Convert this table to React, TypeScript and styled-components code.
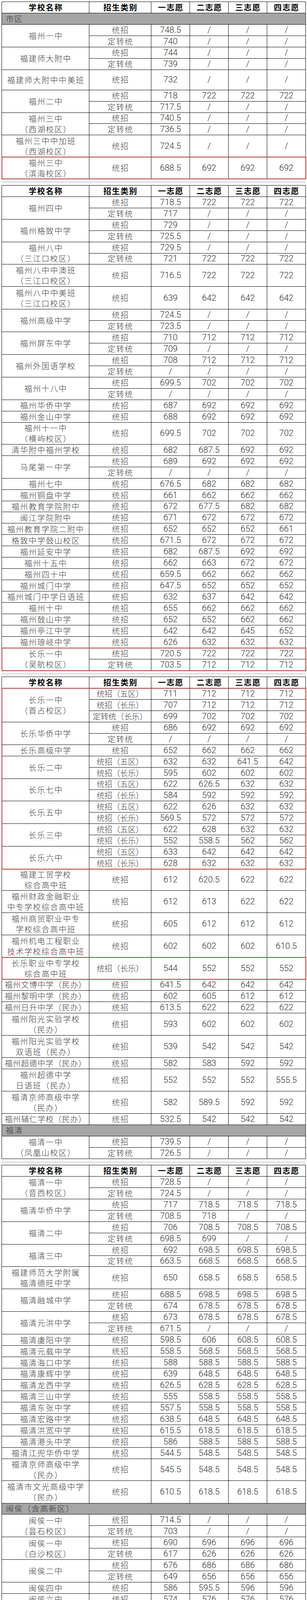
import React from 'react';
import styled, { createGlobalStyle } from 'styled-components';

const ROW = 28.94;
const TALL = 57;

const GlobalStyle = createGlobalStyle`
  html, body {
    margin: 0;
    padding: 0;
    background: #fff;
  }
  body {
    font-family: "Noto Sans CJK SC", "Noto Sans", sans-serif;
    color: #3a3a3a;
  }
`;

const Page = styled.div`
  width: 787px;
  box-sizing: border-box;
  padding: 4px 3px 0 4px;
`;

const Sheet = styled.div`
  width: 780px;
  box-sizing: border-box;
  border-left: 1px solid #000;
  border-top: 1px solid #000;
`;

const Break = styled.div`
  height: 15.5px;
  background:
    linear-gradient(to bottom, transparent 7px, #cdcdcd 7px, #cdcdcd 9px, transparent 9px),
    linear-gradient(to right, transparent 16px, #dadada 16px, #dadada 17px, transparent 17px,
      transparent 761px, #dadada 761px, #dadada 762px, transparent 762px);
`;

const HeadRow = styled.div`
  display: grid;
  grid-template-columns: 224px 159px repeat(4, 99px);
  grid-template-rows: 100%;
  height: ${ROW}px;
`;

const Cell = styled.div`
  box-sizing: border-box;
  min-height: 0;
  border-right: 1px solid #000;
  border-bottom: 1px solid #000;
  display: flex;
  align-items: center;
  justify-content: center;
  white-space: nowrap;
  overflow: hidden;
  line-height: 26px;
`;

const HeadCell = styled(Cell)`
  font-size: 20px;
  font-weight: 700;
  letter-spacing: 2px;
  color: #000;
  padding-left: 2px;
`;

const SectionRow = styled.div`
  box-sizing: border-box;
  height: ${ROW}px;
  background: #a6a6a6;
  border-right: 1px solid #000;
  border-bottom: 1px solid #000;
  display: flex;
  align-items: center;
  padding-left: 10px;
  font-size: 20px;
  font-weight: 300;
  letter-spacing: 2px;
  line-height: 26px;
  color: #333;
`;

const Group = styled.div`
  display: flex;
`;

const NameCell = styled(Cell)<{ $tight: boolean }>`
  width: 224px;
  flex: none;
  flex-direction: column;
  font-size: 20px;
  font-weight: 300;
  line-height: 27px;
  letter-spacing: ${(p) => (p.$tight ? '1px' : '2px')};
  padding-left: ${(p) => (p.$tight ? '1px' : '2px')};
`;

const Subs = styled.div`
  display: flex;
  flex-direction: column;
`;

const SubRow = styled.div<{ $h: number }>`
  display: grid;
  grid-template-columns: 159px repeat(4, 99px);
  grid-template-rows: 100%;
  height: ${(p) => p.$h}px;
`;

const KindCell = styled(Cell)<{ $long: boolean }>`
  font-size: 20px;
  font-weight: 300;
  letter-spacing: ${(p) => (p.$long ? '0' : '2px')};
  padding-left: ${(p) => (p.$long ? '0' : '2px')};
`;

const NumCell = styled(Cell)`
  font-family: Roboto, "Liberation Sans", sans-serif;
  font-size: 22px;
  font-weight: 300;
  color: #333;
`;

const Marked = styled.div`
  outline: 2px solid #b23b35;
  outline-offset: -1px;
`;

type School = { name: string; subs: string[]; h?: number };
type Item =
  | { kind: 'section'; label: string }
  | { kind: 'school'; school: School }
  | { kind: 'mark'; schools: School[] };

const sc = (name: string, subs: string[], h?: number): School => ({ name, subs, h });
const one = (name: string, vals: string, h?: number): Item => ({
  kind: 'school',
  school: sc(name, ['统招 ' + vals], h),
});
const two = (name: string, a: string, b: string): Item => ({
  kind: 'school',
  school: sc(name, ['统招 ' + a, '定转统 ' + b]),
});
const sec = (label: string): Item => ({ kind: 'section', label });
const mark = (...schools: School[]): Item => ({ kind: 'mark', schools });

const NONE = '/ / / /';
const ONLY = (v: string) => `${v} / / /`;

const blocks: Item[][] = [
  [
    sec('市区'),
    two('福州一中', ONLY('748.5'), ONLY('740')),
    two('福建师大附中', ONLY('744'), ONLY('739')),
    one('福建师大附中中美班', ONLY('732'), 52),
    two('福州二中', '718 722 722 722', ONLY('717.5')),
    two('福州三中|（西湖校区）', ONLY('740.5'), ONLY('736.5')),
    one('福州三中中加班|（西湖校区）', ONLY('724.5'), 56),
    mark(sc('福州三中|（滨海校区）', ['统招 688.5 692 692 692'], 56)),
  ],
  [
    two('福州四中', '718.5 722 722 722', ONLY('717')),
    two('福州格致中学', ONLY('729'), ONLY('725.5')),
    two('福州八中|（三江口校区）', ONLY('729.5'), '721 722 722 722'),
    one('福州八中中澳班|（三江口校区）', '716.5 722 722 722'),
    one('福州八中中美班|（三江口校区）', '639 642 642 642', 58),
    two('福州高级中学', ONLY('724.5'), ONLY('723.5')),
    two('福州屏东中学', '710 712 712 712', ONLY('709')),
    two('福州外国语学校', '708 712 712 712', NONE),
    two('福州十八中', '699.5 702 702 702', NONE),
    one('福州华侨中学', '687 692 692 692'),
    one('福州金山中学', '688 692 692 692'),
    one('福州十一中|（横屿校区）', '699.5 702 702 702', 56),
    one('清华附中福州学校', '682 687.5 692 692'),
    two('马尾第一中学', '689 692 692 692', NONE),
    one('福州七中', '676.5 682 682 682'),
    one('福州铜盘中学', '661 662 662 662'),
    one('福州教育学院附中', '672 677.5 682 682'),
    one('闽江学院附中', '671 672 672 672'),
    one('福州教育学院二附中', '652 652 652 661'),
    one('格致中学鼓山校区', '671.5 672 672 672'),
    one('福州延安中学', '682 687.5 692 692'),
    one('福州十五中', '662 663 672 672'),
    one('福州四十中', '659.5 662 662 662'),
    one('福州城门中学', '647.5 652 652 652'),
    one('福州城门中学日语班', '632 637 642 642'),
    one('福州十中', '655 662 662 662'),
    one('福州鼓山中学', '652 652 662 662'),
    one('福州亭江中学', '642 642 645 652'),
    one('福州琅岐中学', '626 632 632 632'),
    mark(sc('长乐一中|（吴航校区）', ['统招 720.5 722 722 722', '定转统 703.5 712 712 712'])),
  ],
  [
    mark(
      sc('长乐一中|（首占校区）', [
        '统招（五区） 711 712 712 712',
        '统招（长乐） 707 712 712 712',
        '定转统（长乐） 699 702 702 702',
      ]),
      sc('长乐华侨中学', ['统招 686 692 692 692', '定转统 ' + NONE]),
      sc('长乐高级中学', ['统招 652 662 662 662']),
      sc('长乐二中', ['统招（五区） 632 632 641.5 642', '统招（长乐） 595 602 602 602']),
      sc('长乐七中', ['统招（五区） 622 626.5 632 632', '统招（长乐） 584 592 592 592']),
      sc('长乐五中', ['统招（五区） 622 626 632 632', '统招（长乐） 569.5 572 572 572']),
      sc('长乐三中', ['统招（五区） 622 628 632 632', '统招（长乐） 552 558.5 562 562']),
      sc('长乐六中', ['统招（五区） 633 642 642 642', '统招（长乐） 628 632 632 632']),
    ),
    one('福建工贸学校|综合高中班', '612 620.5 622 622', 55),
    one('福州财政金融职业|中专学校综合高中班', '612 613 622 622'),
    one('福州商贸职业中专|学校综合高中班', '605 612 612 612'),
    one('福州机电工程职业|技术学校综合高中班', '602 602 602 610.5'),
    mark(sc('长乐职业中专学校|综合高中班', ['统招（长乐） 544 552 552 552'], 56)),
    one('福州文博中学（民办）', '641.5 642 642 642'),
    one('福州黎明中学（民办）', '602 605 612 612'),
    one('福州日升中学（民办）', '613.5 622 622 622'),
    one('福州阳光实验学校|（民办）', '593 602 602 602'),
    one('福州阳光实验学校|双语班（民办）', '539 542 542 542'),
    one('福州超德中学（民办）', '582 583 592 592'),
    one('福州超德中学|日语班（民办）', '552 552 552 555.5'),
    one('福清京师高级中学|（民办）', '582 589.5 592 592'),
    one('福州辅仁学校（民办）', '532.5 542 542 542'),
    sec('福清'),
    two('福清一中|（凤凰山校区）', ONLY('739.5'), ONLY('726.5')),
  ],
  [
    two('福清一中|（音西校区）', ONLY('728.5'), ONLY('724.5')),
    two('福清华侨中学', '717 718.5 718.5 718.5', '708.5 718 / /'),
    two('福清二中', '706 708.5 708.5 708.5', '698.5 699 / /'),
    two('福清三中', '692 698.5 698.5 698.5', '663.5 668.5 668.5 668.5'),
    one('福建师范大学附属|福清德旺中学', '650 658.5 658.5 658.5'),
    two('福清融城中学', '688.5 698.5 698.5 698.5', '674 678.5 678.5 678.5'),
    two('福清元洪中学', '673 678.5 678.5 678.5', ONLY('671.5')),
    one('福清虞阳中学', '598.5 606 608.5 608.5'),
    one('福清元载中学', '558.5 568.5 568.5 568.5'),
    one('福清海口中学', '588 588.5 588.5 588.5'),
    one('福清康辉中学', '639 648.5 648.5 648.5'),
    one('福清龙西中学', '626.5 628.5 628.5 628.5'),
    one('福清三山中学', '555 558.5 558.5 558.5'),
    one('福清东张中学', '557.5 558.5 558.5 558.5'),
    one('福清宏路中学', '638.5 648.5 648.5 648.5'),
    one('福清洪宽中学', '615.5 618.5 618.5 618.5'),
    one('福清港头中学', '586 588.5 588.5 588.5'),
    one('福清江兜华侨中学', '544.5 548.5 548.5 548.5'),
    one('福清京师高级中学|（民办）', '545.5 548.5 548.5 548.5', 56),
    one('福清市文光高级中学|（民办）', '610.5 618.5 618.5 618.5', 58),
    sec('闽侯（含高新区）'),
    two('闽侯一中|（昙石校区）', ONLY('714.5'), ONLY('703')),
    two('闽侯一中|（白沙校区）', '690 696 696 696', '617 626 626 626'),
    two('闽侯二中', '676 686 686 686', '649 656 656 656'),
    one('闽侯四中', '586 595.5 596 596'),
    one('闽侯六中', '574 576 576 576'),
    one('闽侯八中', '553.5 556 556 556'),
    two('福州高新区|第一中学', '661 666 666 666', '651 656 656 656'),
  ],
  [
    one('闽侯职业中专学校|综合高中班', '536 538.5 546 546'),
    one('闽侯县美术中等职业|学校综合高中班', '523.5 526 526 526'),
    sec('连江'),
    two('连江一中', ONLY('725.5'), ONLY('713.5')),
    two('连江尚德中学', '682.5 690.5 690.5 690.5', '666.5 670.5 670.5 670.5'),
    two('连江黄如论中学', ONLY('705'), '699.5 700.5 700.5 700.5'),
    one('连江五中', '598.5 600.5 600.5 600.5'),
    one('连江文笔中学', '636 640.5 640.5 640.5'),
    one('连江二中', '570.5 577 580.5 580.5'),
    one('连江华侨中学', '612 620.5 620.5 620.5'),
    one('连江县进修校附中', '651.5 660.5 660.5 660.5'),
    one('连江县职业中专学校|综合高中班', '530.5 530.5 531 540.5'),
    sec('罗源'),
    two('罗源一中', ONLY('694.5'), ONLY('664.5')),
    two('福州民族中学', '637.5 639.5 639.5 639.5', '601.5 609.5 609.5 609.5'),
    one('罗源二中', '520 529.5 529.5 529.5'),
    sec('闽清'),
    two('闽清一中', ONLY('696.5'), ONLY('677')),
    one('闽清高级中学', '612 616.5 616.5 616.5'),
    one('闽清二中', '501.5 506.5 506.5 506.5'),
    sec('永泰'),
    two('永泰一中', ONLY('698'), ONLY('674.5')),
    one('永泰二中', '549 558 558 558'),
    one('永泰三中', '584.5 588 588 588'),
    one('永泰城关中学', '631.5 638 638 638'),
    one('永泰城乡职业建设|中专学校综合高中班', '533.5 538 538 538'),
  ],
];

const headers = ['学校名称', '招生类别', '一志愿', '二志愿', '三志愿', '四志愿'];

const SchoolRows = ({ school }: { school: School }) => {
  const lines = school.name.split('|');
  const single = school.subs.length === 1;
  const h = school.h ?? (single && lines.length > 1 ? TALL : ROW);
  const tight = lines.some((l) => l.length >= 10);

  return (
    <Group>
      <NameCell $tight={tight}>
        {lines.map((l) => (
          <span key={l}>{l}</span>
        ))}
      </NameCell>
      <Subs>
        {school.subs.map((sub, i) => {
          const [kind, ...vals] = sub.split(' ');
          return (
            <SubRow key={i} $h={h}>
              <KindCell $long={kind.length > 3}>{kind}</KindCell>
              {vals.map((v, j) => (
                <NumCell key={j}>{v}</NumCell>
              ))}
            </SubRow>
          );
        })}
      </Subs>
    </Group>
  );
};

const Block = ({ items }: { items: Item[] }) => (
  <Sheet>
    <HeadRow>
      {headers.map((t) => (
        <HeadCell key={t}>{t}</HeadCell>
      ))}
    </HeadRow>
    {items.map((it, i) => {
      if (it.kind === 'section') return <SectionRow key={i}>{it.label}</SectionRow>;
      if (it.kind === 'mark')
        return (
          <Marked key={i}>
            {it.schools.map((s) => (
              <SchoolRows key={s.name} school={s} />
            ))}
          </Marked>
        );
      return <SchoolRows key={i} school={it.school} />;
    })}
  </Sheet>
);

export default function App() {
  return (
    <>
      <GlobalStyle />
      <Page>
        {blocks.map((items, i) => (
          <React.Fragment key={i}>
            {i > 0 && <Break />}
            <Block items={items} />
          </React.Fragment>
        ))}
      </Page>
    </>
  );
}
